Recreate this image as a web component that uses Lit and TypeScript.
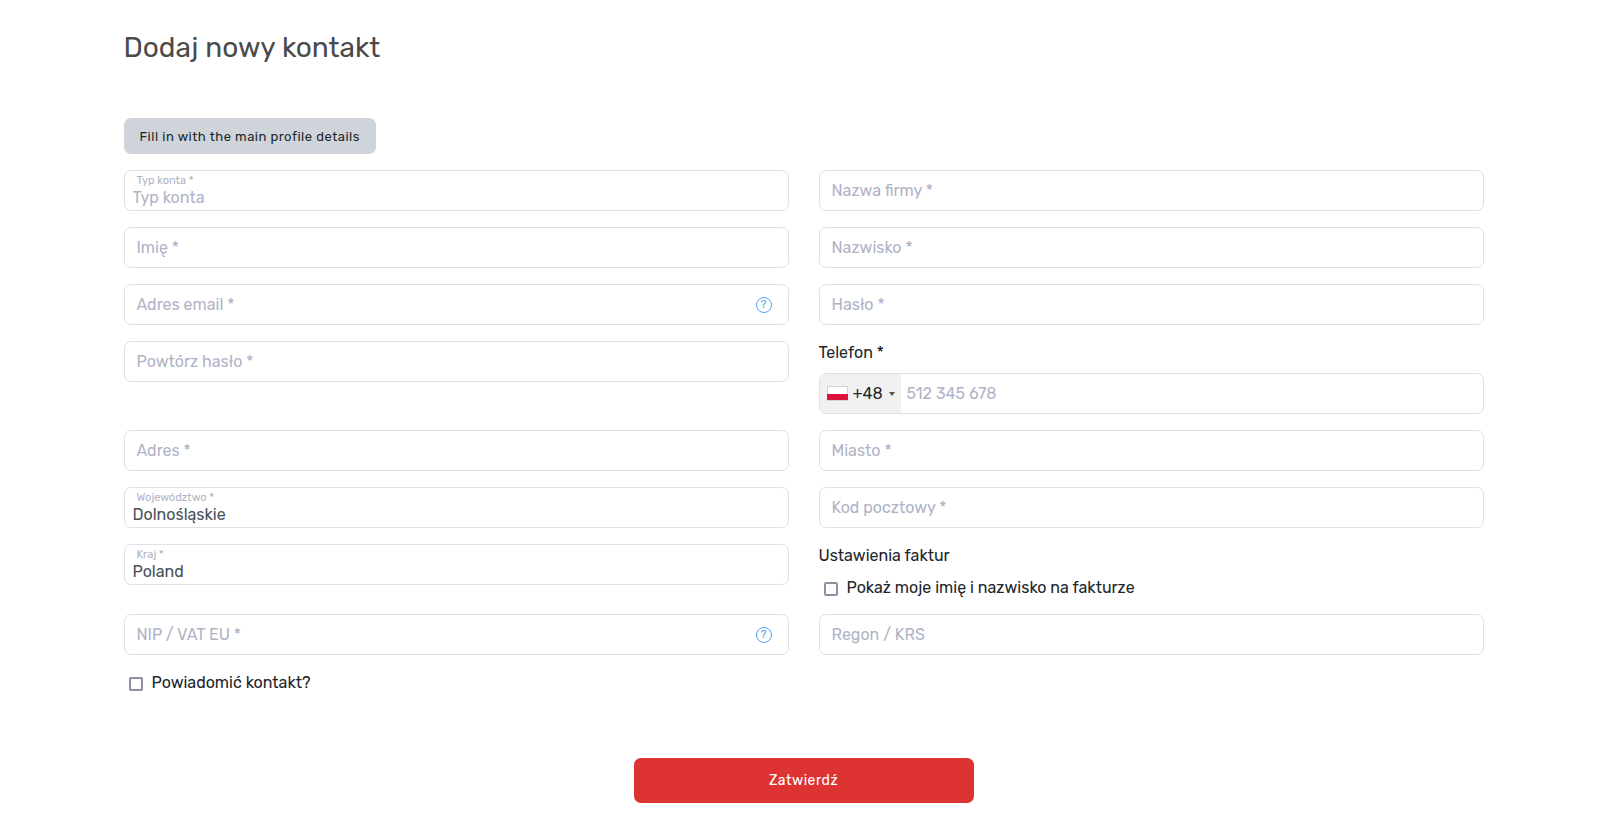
import { LitElement, html, css, nothing } from "lit";
import { customElement, property } from "lit/decorators.js";

const controls = css`
  *, *::before, *::after { box-sizing: border-box; }
  input, select, button { font: inherit; color: inherit; margin: 0; }
  .box {
    display: grid;
    grid-template-columns: minmax(0, 1fr) auto;
    align-items: center;
    height: 41px;
    border: 1px solid #dee0e8;
    border-radius: 7px;
    background: #fff;
    overflow: hidden;
  }
  .box:focus-within { border-color: #5aa9f5; }
`;

@customElement("text-field")
export class TextField extends LitElement {
  @property() label = "";
  @property() type = "text";
  @property() hint = "";

  static styles = [controls, css`
    :host { display: block; }
    .control {
      grid-area: 1 / 1;
      width: 100%;
      height: 39px;
      padding: 0 12px;
      border: 0;
      outline: 0;
      background: transparent;
      color: #495057;
    }
    .caption {
      grid-area: 1 / 1;
      padding: 0 12px;
      line-height: 24px;
      color: #b0b3c6;
      pointer-events: none;
    }
    .control:not(:placeholder-shown) + .caption { visibility: hidden; }
    .help {
      display: grid;
      place-items: center;
      width: 16px;
      height: 16px;
      margin-right: 16px;
      padding: 0;
      border: 1px solid #4fa3f7;
      border-radius: 50%;
      background: none;
      color: #4fa3f7;
      font-size: 11px;
      line-height: 14px;
    }
  `];

  render() {
    return html`
      <div class="box">
        <input class="control" id="control" type=${this.type} placeholder=" " />
        <label class="caption" for="control">${this.label}</label>
        ${this.hint
          ? html`<button class="help" type="button" aria-label=${this.hint}>?</button>`
          : nothing}
      </div>
    `;
  }
}

@customElement("select-field")
export class SelectField extends LitElement {
  @property() label = "";
  @property({ type: Array }) options: string[] = [];
  @property({ type: Boolean, reflect: true }) empty = false;

  static styles = [controls, css`
    :host { display: block; }
    .box {
      grid-template-columns: minmax(0, 1fr);
      grid-template-rows: 15px 20px;
      align-content: start;
      padding-top: 2px;
    }
    .caption {
      padding-left: 12px;
      font-size: 11px;
      line-height: 16px;
      color: #b0b3c6;
    }
    .control {
      appearance: none;
      width: 100%;
      height: 20px;
      padding: 0 8px;
      border: 0;
      outline: 0;
      background: transparent;
      line-height: 20px;
      color: #495057;
    }
    :host([empty]) .control { color: #b0b3c6; }
  `];

  render() {
    return html`
      <div class="box">
        <label class="caption" for="control">${this.label}</label>
        <select class="control" id="control">
          ${this.options.map((o) => html`<option>${o}</option>`)}
        </select>
      </div>
    `;
  }
}

@customElement("phone-field")
export class PhoneField extends LitElement {
  static styles = [controls, css`
    :host { display: grid; gap: 8px; }
    .title { line-height: 24px; }
    .box { grid-template-columns: auto minmax(0, 1fr); }
    .dial {
      display: flex;
      align-items: center;
      gap: 5px;
      height: 39px;
      padding: 0 6px 0 7px;
      background: #f1f1f1;
    }
    .flag { display: block; width: 21px; height: 15px; }
    .code {
      appearance: none;
      padding: 0;
      border: 0;
      outline: 0;
      background: transparent;
      line-height: 24px;
    }
    .caret { display: block; width: 6px; height: 4px; }
    .number {
      width: 100%;
      height: 39px;
      padding: 0 6px;
      border: 0;
      outline: 0;
      background: transparent;
    }
    .number::placeholder { color: #b0b3c6; opacity: 1; }
  `];

  render() {
    return html`
      <label class="title" for="number">Telefon *</label>
      <div class="box">
        <div class="dial">
          <svg class="flag" viewBox="0 0 21 15" aria-hidden="true">
            <rect x="0.5" y="0.5" width="20" height="14" fill="#fff" stroke="#d3d3d3" />
            <rect x="0" y="8" width="21" height="6" fill="#dc143c" />
          </svg>
          <select class="code" aria-label="Numer kierunkowy">
            <option>+48</option>
          </select>
          <svg class="caret" viewBox="0 0 6 4" aria-hidden="true">
            <path d="M0 0h6L3 4z" fill="#555" />
          </svg>
        </div>
        <input class="number" id="number" type="tel" placeholder="512 345 678" />
      </div>
    `;
  }
}

@customElement("check-field")
export class CheckField extends LitElement {
  @property() label = "";

  static styles = [controls, css`
    :host { display: block; }
    .row {
      display: flex;
      align-items: center;
      gap: 9px;
      padding-left: 5px;
      line-height: 24px;
    }
    .tick {
      appearance: none;
      width: 14px;
      height: 14px;
      margin-top: 2px;
      border: 2px solid #8f8fa3;
      border-radius: 2px;
      background: #fff;
    }
    .tick:checked { background: #8f8fa3; }
  `];

  render() {
    return html`
      <label class="row"><input class="tick" type="checkbox" />${this.label}</label>
    `;
  }
}

@customElement("app-root")
export class AppRoot extends LitElement {
  static styles = [controls, css`
    :host {
      display: block;
      font-family: Rubik, Roboto, "Noto Sans", sans-serif;
      font-size: 16px;
      color: #212529;
    }
    .page {
      max-width: 1390px;
      margin: 0 auto;
      padding: 28px 15px 24px;
    }
    .heading {
      margin: 0 0 50px;
      font-size: 28px;
      font-weight: 400;
      line-height: 40px;
      color: #4a4a4a;
    }
    .fill {
      display: block;
      height: 36px;
      margin-bottom: 16px;
      padding: 0 16px;
      border: 0;
      border-radius: 7px;
      background: #ced4da;
      font-size: 13px;
      font-weight: 400;
      letter-spacing: 0.5px;
    }
    .fields {
      display: grid;
      grid-template-columns: repeat(2, minmax(0, 1fr));
      gap: 16px 30px;
      align-items: start;
    }
    .invoice {
      display: grid;
      gap: 8px;
      margin-bottom: -2px;
    }
    .legend { line-height: 24px; }
    .submit {
      display: block;
      width: 340px;
      max-width: 100%;
      height: 45px;
      margin: 63px auto 0;
      border: 0;
      border-radius: 7px;
      background: #de3333;
      color: #fff;
      font-size: 14px;
      font-weight: 400;
      letter-spacing: 0.5px;
    }
  `];

  render() {
    return html`
      <main class="page">
        <h1 class="heading">Dodaj nowy kontakt</h1>
        <form>
          <button class="fill" type="button">Fill in with the main profile details</button>
          <div class="fields">
            <select-field label="Typ konta *" .options=${["Typ konta"]} empty></select-field>
            <text-field label="Nazwa firmy *"></text-field>
            <text-field label="Imię *"></text-field>
            <text-field label="Nazwisko *"></text-field>
            <text-field label="Adres email *" type="email" hint="Pomoc"></text-field>
            <text-field label="Hasło *" type="password"></text-field>
            <text-field label="Powtórz hasło *" type="password"></text-field>
            <phone-field></phone-field>
            <text-field label="Adres *"></text-field>
            <text-field label="Miasto *"></text-field>
            <select-field label="Województwo *" .options=${["Dolnośląskie"]}></select-field>
            <text-field label="Kod pocztowy *"></text-field>
            <select-field label="Kraj *" .options=${["Poland"]}></select-field>
            <div class="invoice" role="group" aria-labelledby="invoice">
              <div class="legend" id="invoice">Ustawienia faktur</div>
              <check-field label="Pokaż moje imię i nazwisko na fakturze"></check-field>
            </div>
            <text-field label="NIP / VAT EU *" hint="Pomoc"></text-field>
            <text-field label="Regon / KRS"></text-field>
            <check-field label="Powiadomić kontakt?"></check-field>
          </div>
          <button class="submit" type="button">Zatwierdź</button>
        </form>
      </main>
    `;
  }
}
